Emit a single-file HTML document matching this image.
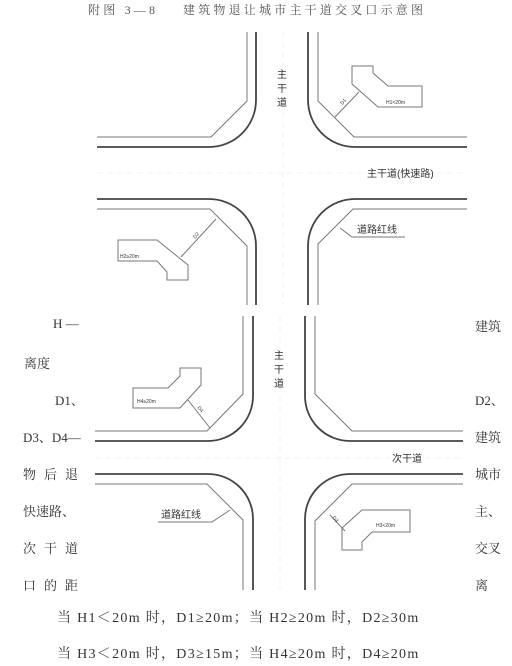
<!DOCTYPE html>
<html><head><meta charset="utf-8"><style>
html,body{margin:0;padding:0;background:#fff;}
body{width:512px;height:666px;position:relative;overflow:hidden;font-family:"Liberation Serif","Noto Serif CJK SC","Noto Sans CJK SC",serif;color:#333;}
.t{position:absolute;white-space:nowrap;font-size:13px;}
svg{position:absolute;left:0;top:0;}
</style></head><body>
<div class="t" style="left:88px;top:1px;font-size:12px;color:#555;letter-spacing:3.2px;">附图 3—8&nbsp;&nbsp;&nbsp;&nbsp;建筑物退让城市主干道交叉口示意图</div>
<svg width="512" height="666" viewBox="0 0 512 666" font-family="Liberation Sans, Noto Sans CJK SC, sans-serif">
<g fill="none" stroke-linecap="butt">
<line x1="283" y1="32" x2="283" y2="305" stroke="#f2f2f2" stroke-dasharray="6 4"/>
<line x1="97" y1="173" x2="467" y2="173" stroke="#f2f2f2" stroke-dasharray="6 4"/>
<g stroke="#444" stroke-width="1.8">
<path d="M256 32 V100 A47 47 0 0 1 209 147 H97"/>
<path d="M308 32 V100 A47 47 0 0 0 355 147 H467"/>
<path d="M97 199 H209 A47 47 0 0 1 256 246 V305"/>
<path d="M467 199 H355 A47 47 0 0 0 308 246 V305"/>
</g>
<g stroke="#777" stroke-width="1">
<path d="M247 32 V101 L211 137 H97"/>
<path d="M318 32 V101 L354 137 H467"/>
<path d="M97 209 H210 L247 246 V305"/>
<path d="M467 209 H353 L318 244 V305"/>
<path d="M352 66 H373 V73 L388 86 H422 V107 H378 L352 84 Z"/>
<path d="M118 240 H157 L188 265 V280 H167 V272 L157 261 H118 Z"/>
<path d="M335 117 L359 92"/>
<path d="M181 257 L216 219"/>
<path d="M340 228 L352 237 H405"/>
</g>
<line x1="280" y1="316" x2="280" y2="590" stroke="#f2f2f2" stroke-dasharray="6 4"/>
<line x1="95" y1="458" x2="463" y2="458" stroke="#f2f2f2" stroke-dasharray="6 4"/>
<g stroke="#444" stroke-width="1.8">
<path d="M253 316 V396 A45 45 0 0 1 208 441 H95"/>
<path d="M305 316 V396 A45 45 0 0 0 350 441 H463"/>
<path d="M95 474 H208 A45 45 0 0 1 253 519 V590"/>
<path d="M463 474 H350 A45 45 0 0 0 305 519 V590"/>
</g>
<g stroke="#777" stroke-width="1">
<path d="M243 316 V394 L207 431 H95"/>
<path d="M315 316 V394 L352 431 H463"/>
<path d="M95 484 H207 L243 520 V590"/>
<path d="M463 484 H352 L315 521 V590"/>
<path d="M133 388 H168 L180 376 V368 H201 V385 L180 408 H133 Z"/>
<path d="M362 510 H410 V532 H372 L362 542 V550 H342 V528 Z"/>
<path d="M188 400 L210 428"/>
<path d="M330 515 L345 531"/>
<path d="M230 510 L212 522 H158"/>
</g>
</g>
<g fill="#333" font-size="10">
<text x="277" y="78">主</text><text x="277" y="92">干</text><text x="277" y="106">道</text>
<text x="367" y="177" font-size="10">主干道(快速路)</text>
<text x="357" y="233" font-size="10">道路红线</text>
<text x="274" y="359">主</text><text x="274" y="373">干</text><text x="274" y="387">道</text>
<text x="392" y="462">次干道</text>
<text x="161" y="518">道路红线</text>
</g>
<g fill="#333" font-size="5">
<text x="386" y="104">H1&lt;20m</text>
<text x="120" y="258">H2≥20m</text>
<text x="137" y="403">H4≥20m</text>
<text x="376" y="527">H3&lt;20m</text>
<text x="341" y="104" transform="rotate(-50 343 103)">D1</text>
<text x="193" y="238" transform="rotate(-50 195 236)">D2</text>
<text x="198" y="410" transform="rotate(50 200 408)">D4</text>
<text x="333" y="520" transform="rotate(50 335 518)">D3</text>
</g>
</svg>
<div class="t" style="left:53px;top:316px;">H —</div>
<div class="t" style="left:24px;top:353px;">离度</div>
<div class="t" style="left:55px;top:390px;">D1、</div>
<div class="t" style="left:23px;top:427px;">D3、D4—</div>
<div class="t" style="left:23px;top:464px;letter-spacing:8px;">物后退</div>
<div class="t" style="left:23px;top:501px;">快速路、</div>
<div class="t" style="left:23px;top:538px;letter-spacing:8px;">次干道</div>
<div class="t" style="left:23px;top:575px;letter-spacing:8px;">口的距</div>
<div class="t" style="left:475px;top:316px;">建筑</div>
<div class="t" style="left:475px;top:390px;">D2、</div>
<div class="t" style="left:475px;top:427px;">建筑</div>
<div class="t" style="left:475px;top:464px;">城市</div>
<div class="t" style="left:475px;top:501px;">主、</div>
<div class="t" style="left:475px;top:538px;">交叉</div>
<div class="t" style="left:475px;top:575px;">离</div>
<div class="t" style="left:57px;top:607px;font-size:14px;letter-spacing:1.3px;">当 H1＜20m 时，D1≥20m；当 H2≥20m 时，D2≥30m</div>
<div class="t" style="left:57px;top:643px;font-size:14px;letter-spacing:1.3px;">当 H3＜20m 时，D3≥15m；当 H4≥20m 时，D4≥20m</div>
</body></html>
